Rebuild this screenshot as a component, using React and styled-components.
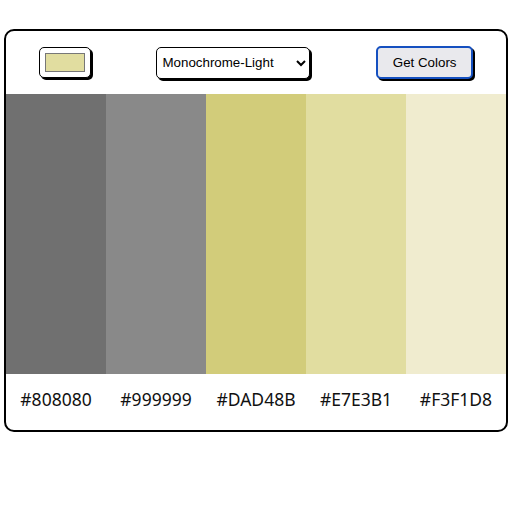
import React, { useState } from "react";
import styled, { createGlobalStyle } from "styled-components";

const Global = createGlobalStyle`
  html, body { margin: 0; padding: 0; background: #fff; }
  body { padding: 29px 4px; font-family: "Liberation Sans", Arial, sans-serif; }
`;

const Card = styled.div`
  width: 500px;
  border: 2px solid #000;
  border-radius: 10px;
  overflow: hidden;
  background: #fff;
`;

const Toolbar = styled.div`
  height: 63px;
  display: flex;
  align-items: center;
  justify-content: space-around;
`;

const ColorInput = styled.input`
  box-sizing: border-box;
  width: 52px;
  height: 31px;
  margin: 0;
  padding: 5px;
  border: 1px solid #000;
  border-radius: 5px;
  background: #fff;
  box-shadow: 2px 2px 0 #000;
  cursor: pointer;
  &::-webkit-color-swatch-wrapper { padding: 0; }
  &::-webkit-color-swatch { border: 1px solid #777; border-radius: 0; }
`;

const Select = styled.select`
  box-sizing: border-box;
  width: 154px;
  height: 32px;
  margin: 0;
  padding: 0 1px;
  border: 1px solid #000;
  border-radius: 5px;
  background: #fff;
  color: #000;
  font-family: "Liberation Sans", Arial, sans-serif;
  font-size: 13.33px;
  box-shadow: 2px 2px 0 #000;
`;

const Button = styled.button`
  box-sizing: border-box;
  width: 97px;
  height: 33px;
  margin: 0;
  border: 2px solid #1550c0;
  border-radius: 5px;
  background: #e9e9ed;
  color: #000;
  font-family: "Liberation Sans", Arial, sans-serif;
  font-size: 13.33px;
  box-shadow: 2px 2px 0 #000;
`;

const Palette = styled.div`
  display: grid;
  grid-template-columns: repeat(5, 1fr);
`;

const Column = styled.div`
  display: flex;
  flex-direction: column;
`;

const Swatch = styled.div`
  height: 280px;
  background: ${(p) => p.$color};
`;

const Label = styled.div`
  box-sizing: border-box;
  height: 56px;
  padding-bottom: 6px;
  display: flex;
  align-items: center;
  justify-content: center;
  font-family: "Noto Sans", "Open Sans", sans-serif;
  font-size: 17.5px;
  color: #111;
`;

const colors = [
  { hex: "#808080", shown: "#707070" },
  { hex: "#999999", shown: "#898989" },
  { hex: "#DAD48B", shown: "#D2CC7A" },
  { hex: "#E7E3B1", shown: "#E1DDA0" },
  { hex: "#F3F1D8", shown: "#F0ECCF" },
];

export default function App() {
  const [seed, setSeed] = useState("#e1dda0");
  const [mode, setMode] = useState("monochrome-light");
  return (
    <>
      <Global />
      <Card>
        <Toolbar>
          <ColorInput type="color" value={seed} onChange={(e) => setSeed(e.target.value)} />
          <Select value={mode} onChange={(e) => setMode(e.target.value)}>
            <option value="monochrome">Monochrome</option>
            <option value="monochrome-dark">Monochrome-Dark</option>
            <option value="monochrome-light">Monochrome-Light</option>
            <option value="analogic">Analogic</option>
            <option value="complement">Complement</option>
          </Select>
          <Button type="button">Get Colors</Button>
        </Toolbar>
        <Palette>
          {colors.map((c) => (
            <Column key={c.hex}>
              <Swatch $color={c.shown} />
              <Label>{c.hex}</Label>
            </Column>
          ))}
        </Palette>
      </Card>
    </>
  );
}
